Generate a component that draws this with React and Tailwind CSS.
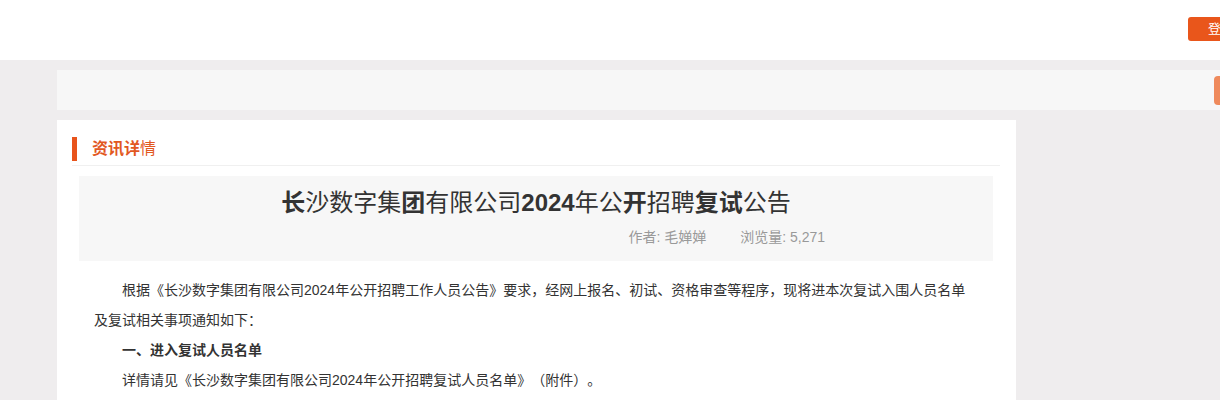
import React from "react";

const Title = () => {
  // some glyphs render heavier in the original page, keep that look
  const parts = [
    ["长", true],
    ["沙数字集", false],
    ["团", true],
    ["有限公司", false],
    ["2024", true],
    ["年公", false],
    ["开", true],
    ["招聘", false],
    ["复试", true],
    ["公告", false],
  ];
  return (
    <h1 className="text-center text-[24px] leading-[30px] text-[#333] font-normal">
      {parts.map(([t, b], i) => (
        <span key={i} className={b ? "font-bold" : "font-normal"}>
          {t}
        </span>
      ))}
    </h1>
  );
};

const App = () => {
  return (
    <div
      className="w-[1220px] h-[400px] overflow-hidden bg-[#efedee]"
      style={{ fontFamily: '"Liberation Sans", "Noto Sans CJK SC", sans-serif' }}
    >
      {/* HEADER */}
      <header className="h-[60px] bg-white pt-[17px] pl-[1188px] flex items-start">
        <button className="h-[24px] w-[64px] shrink-0 rounded-[3px] bg-[#e9561b] text-white text-[13px] leading-[24px] pl-[20px] text-left">
          登录
        </button>
      </header>

      <div className="pl-[57px] pt-[10px]">
        {/* SEARCH BAR */}
        <div className="w-[1200px] h-[40px] bg-[#f7f7f7] flex items-center pl-[1157px]">
          <div className="h-[29px] w-[60px] shrink-0 rounded-[4px] bg-[#ef8a5c]" />
        </div>

        {/* ARTICLE CARD */}
        <div className="mt-[10px] w-[959px] h-[300px] bg-white pt-[17px] pl-[15px] pr-[16px]">
          <div className="flex items-start h-[29px] border-b border-[#f0f0f0]">
            <span className="w-[5px] h-[24px] bg-[#e8541c]" />
            <span className="ml-[15px] text-[16px] leading-[24px] text-[#e2581f]">
              <span className="font-bold">资讯详</span>情
            </span>
          </div>

          <div className="mx-[7px] mt-[10px]">
            <div className="bg-[#f7f7f7] h-[85px] pt-[12px]">
              <Title />
              <div className="mt-[9px] flex justify-end gap-[34px] pr-[168px] text-[14px] leading-[20px] text-[#999]">
                <span>作者: 毛婵婵</span>
                <span>浏览量: 5,271</span>
              </div>
            </div>

            <div className="mt-[14px] px-[15px] text-[14px] leading-[30px] text-[#333] [text-spacing-trim:space-all]">
              <p className="indent-[28px]">
                根据《长沙数字集团有限公司2024年公开招聘工作人员公告》要求，经网上报名、初试、资格审查等程序，现将进本次复试入围人员名单及复试相关事项通知如下：
              </p>
              <p className="indent-[28px] font-bold">一、进入复试人员名单</p>
              <p className="indent-[28px]">
                详情请见《长沙数字集团有限公司2024年公开招聘复试人员名单》（附件）。
              </p>
            </div>
          </div>
        </div>
      </div>
    </div>
  );
};

export default App;
